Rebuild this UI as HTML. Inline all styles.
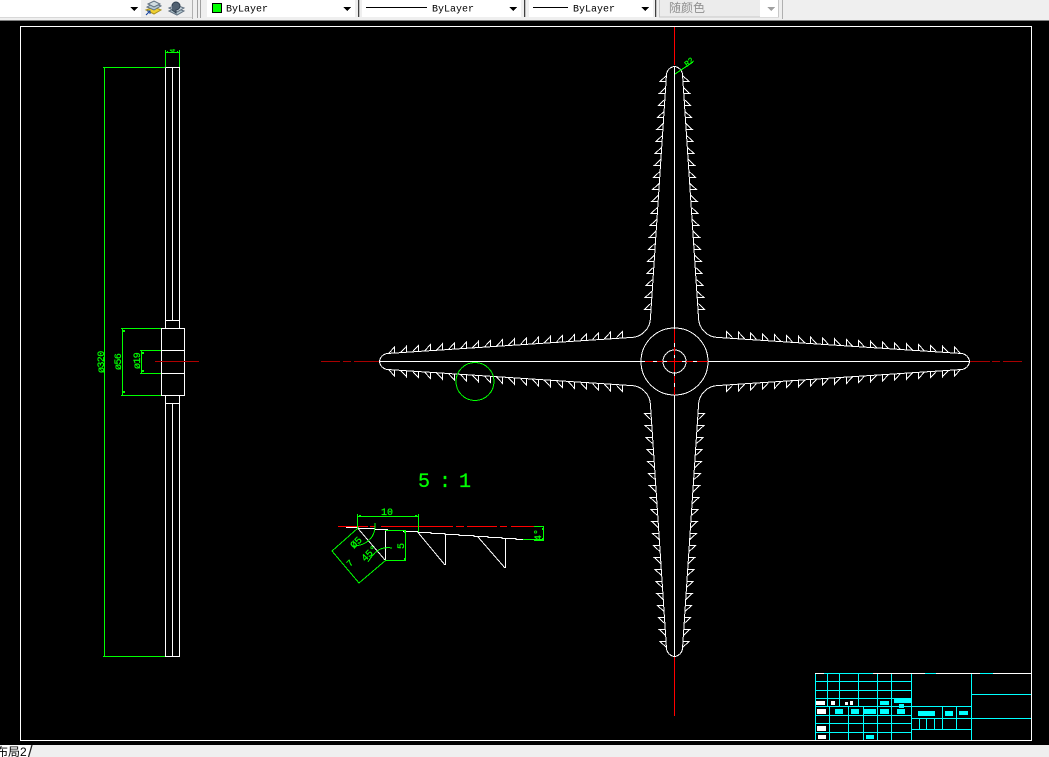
<!DOCTYPE html>
<html><head><meta charset="utf-8"><style>
html,body{margin:0;padding:0;width:1049px;height:757px;overflow:hidden;background:#000}
svg{position:absolute;left:0;top:0;display:block}
text{font-family:"Liberation Mono","Noto Sans CJK SC",monospace}
.g text,text.g{stroke:#0f0;stroke-width:.25}
</style></head><body>
<svg width="1049" height="757" viewBox="0 0 1049 757" xmlns="http://www.w3.org/2000/svg" shape-rendering="crispEdges">
<defs>
<g id="half" fill="none" stroke="#fff" stroke-width="1">
<path d="M-295 0A9 9 0 0 1-287-8L-44-24A20 20 0 0 0-24-44"/>
<path d="M-286-8L-280-14.5V-8M-274-8.8L-268-15.3V-8.8M-262-9.7L-256-16.2V-9.7M-250-10.5L-244-17V-10.5M-238-11.3L-232-17.8V-11.3M-226-12.1L-220-18.6V-12.1M-214-13L-208-19.5V-13M-202-13.8L-196-20.3V-13.8M-190-14.6L-184-21.1V-14.6M-178-15.4L-172-21.9V-15.4M-166-16.3L-160-22.8V-16.3M-154-17.1L-148-23.6V-17.1M-142-17.9L-136-24.4V-17.9M-130-18.8L-124-25.3V-18.8M-118-19.6L-112-26.1V-19.6M-106-20.4L-100-26.9V-20.4M-94-21.2L-88-27.7V-21.2M-82-22.1L-76-28.6V-22.1M-70-22.9L-64-29.4V-22.9M-58-23.7L-52-30.2V-23.7"/>
</g>
</defs>

<!-- toolbar -->
<rect x="0" y="0" width="1049" height="21" fill="#efefef"/>
<rect x="0" y="20" width="1049" height="1" fill="#808080"/>
<rect x="0" y="0" width="141" height="17" fill="#fff"/>
<rect x="0" y="17" width="192" height="1" fill="#d8d8d8"/>
<rect x="192" y="0" width="1" height="19" fill="#b0b0b0"/>
<rect x="197" y="0" width="1" height="18" fill="#a0a0a0"/>
<rect x="200" y="0" width="1" height="18" fill="#a0a0a0"/>
<rect x="207" y="0" width="148" height="17" fill="#fff"/>
<rect x="358" y="0" width="1" height="17" fill="#404040"/>
<rect x="359" y="0" width="1" height="17" fill="#c0c0c0"/>
<rect x="362" y="0" width="159" height="17" fill="#fff"/>
<rect x="524" y="0" width="1" height="17" fill="#404040"/>
<rect x="525" y="0" width="1" height="17" fill="#c0c0c0"/>
<rect x="529" y="0" width="124" height="17" fill="#fff"/>
<rect x="655" y="0" width="1" height="17" fill="#404040"/>
<rect x="656" y="0" width="1" height="17" fill="#c0c0c0"/>
<rect x="659.500" y="-1" width="119" height="18" fill="#ececec" stroke="#c8c8c8"/>
<rect x="760" y="0" width="18" height="17" fill="#fff"/>
<rect x="782" y="0" width="1" height="19" fill="#b0b0b0"/>
<path d="M130 7h8l-4 4zM343 7h8l-4 4zM509 7h8l-4 4zM641 7h8l-4 4z" fill="#000"/>
<path d="M767 7h8l-4 4z" fill="#a0a0a0"/>
<!-- layer icons -->
<g shape-rendering="auto">
<path d="M146 10l8-3 7 3-7 4z" fill="#f0d030" stroke="#a89020"/>
<path d="M147 7l7-4 7 3-7 4z" fill="#b4c8d0" stroke="#607080"/>
<path d="M148 4l6-3 6 3-6 3z" fill="#d0dce0" stroke="#607080"/>
<path d="M146 15l4-4M147 11h3v3" stroke="#1040a0" fill="none"/>
<path d="M169 11l7-3 8 3-7 4z" fill="#b4c8d0" stroke="#607080"/>
<path d="M169 8l7-3 8 3-7 4z" fill="#c8d4dc" stroke="#607080"/>
<path d="M172 6a4 4 0 1 1 4 4v3l-4-3" fill="#506070" stroke="#304050"/>
</g>
<!-- combos -->
<rect x="212.500" y="3.500" width="9" height="9" fill="#0f0" stroke="#000"/>
<text x="226" y="11.500" font-size="10" fill="#000">ByLayer</text>
<rect x="366" y="7" width="61" height="1" fill="#000"/>
<text x="432" y="11.500" font-size="10" fill="#000">ByLayer</text>
<rect x="533" y="7" width="35" height="1" fill="#000"/>
<text x="573" y="11.500" font-size="10" fill="#000">ByLayer</text>
<text x="669" y="12" font-size="12" fill="#909090" style="font-family:'Noto Sans CJK SC',sans-serif">随颜色</text>

<!-- status -->
<rect x="0" y="745" width="1049" height="12" fill="#efefef"/>
<rect x="0" y="745" width="30" height="12" fill="#fff"/>
<text x="-4" y="756" font-size="12" fill="#000" style="font-family:'Liberation Sans','Noto Sans CJK SC',sans-serif">布局2</text>
<path d="M32 745L28.500 757" stroke="#222" stroke-width="1.300" shape-rendering="auto"/>

<!-- frame -->
<rect x="20.500" y="26.500" width="1011" height="714" fill="none" stroke="#fff"/>

<!-- side view -->
<g fill="none" stroke="#fff">
<path d="M165.500 67.500H179.500V328M165.500 67.500V328M172.500 67.500V320.500M165.500 320.500H179.500"/>
<rect x="161.500" y="328.500" width="23" height="67"/>
<path d="M161.500 350.500H184.500M161.500 373.500H184.500"/>
<path d="M165.500 395.500V656.500H179.500V395.500M172.500 403.500V656.500M165.500 403.500H179.500"/>
</g>
<path d="M155 361.500H199" stroke="#b00000"/>
<g fill="none" stroke="#0f0">
<path d="M103 67.500H165M103 656.500H165M104.500 67V657"/>
<path d="M121 328.500H161M121 395.500H161M122.500 328V396"/>
<path d="M140 350.500H161M140 373.500H161M141.500 350V374"/>
<path d="M165.500 50V67M179.500 50V67M165 52.500H180"/>
</g>
<path d="M123 330h2v2h-2zM123 391h2v2h-2zM142 352h2v2h-2zM142 370h2v2h-2zM167 51h1v1h-1zM177 51h1v1h-1z" fill="#0f0"/>

<!-- front view -->
<path d="M321 361.500H340M343 361.500H351M354 361.500H380M970 361.500H990M992 361.500H1000M1003 361.500H1022" stroke="#a80000"/>
<g transform="translate(674.5,361.5)">
<use href="#half"/>
<use href="#half" transform="scale(1,-1)"/>
<use href="#half" transform="scale(-1,1)"/>
<use href="#half" transform="scale(-1,-1)"/>
<use href="#half" transform="rotate(90)"/>
<use href="#half" transform="rotate(90) scale(1,-1)"/>
<use href="#half" transform="rotate(90) scale(-1,1)"/>
<use href="#half" transform="rotate(90) scale(-1,-1)"/>
<path d="M-295 0H295M0-295V295" stroke="#fff"/>
</g>
<g fill="none" stroke="#fff">
<circle cx="674.500" cy="361.500" r="33.500"/>
<circle cx="674.500" cy="361.500" r="11.500"/>
</g>
<g stroke="#f00" fill="none">
<path d="M674.500 27V65M674.500 657V716"/>
<path d="M645 361.500H653M657 361.500H663M667 361.500H682M686 361.500H693M697 361.500H708"/>
<path d="M674.500 329V343M674.500 347V355M674.500 358V372M674.500 376V383M674.500 387V395"/>
</g>
<path d="M675 74L693 62" stroke="#0f0" fill="none"/>
<text class="g" x="0" y="0" font-size="8" fill="#0f0" transform="translate(687,67) rotate(-40)">R2</text>

<circle cx="475" cy="381.500" r="19" fill="none" stroke="#0f0"/>

<!-- dimension text -->
<g class="g" fill="#0f0" font-size="10">
<text transform="translate(104,373) rotate(-90)" style="letter-spacing:-.6px">ø320</text>
<text transform="translate(121,370) rotate(-90)" style="letter-spacing:-.6px">ø56</text>
<text transform="translate(140,369) rotate(-90)" style="letter-spacing:-.6px">ø19</text>
<text transform="translate(175,53) rotate(-90)" font-size="7">4</text>
</g>

<!-- 5:1 -->
<g class="g" fill="#0f0" font-size="20">
<text x="418" y="487">5</text>
<text x="439" y="487">:</text>
<text x="459" y="487">1</text>
</g>

<!-- detail -->
<path d="M338 526.500H368M370 526.500H375M381 526.500H453M456 526.500H464M467 526.500H497M500 526.500H507M511 526.500H542" stroke="#f00" fill="none"/>
<path d="M346 527.500H358V528.500H375V529.500H388M403 531.500H418V532.500H431V533.500H445V534.500H459V535.500H474V536.500H488V537.500H502V538.500H516V539.500H523" stroke="#fff" fill="none"/>
<path d="M385.500 529.500V560M445.500 534V565M505.500 539V568" stroke="#fff" fill="none"/>
<path d="M523 539.500H544M534 526.500H544M534 540.500H544M543.500 526V541" stroke="#0f0" fill="none"/>
<path d="M357.500 514V528M418.500 514V532M358 516.500H418M385 530.500H406M385 560.500H406M405.500 530V561" stroke="#0f0" fill="none"/>
<path d="M359 515h2v2h-2zM415 515h2v2h-2zM404 531h2v2h-2zM404 558h2v2h-2zM542 528h2v2h-2zM542 538h2v2h-2z" fill="#0f0"/>
<g fill="none">
<path d="M358 528.500L385 560M418 532.500L445 565M478 537L505 568" stroke="#fff"/>
<path d="M358 528L332 551L359 583L386 560" stroke="#0f0"/>
<path d="M375 523C376 538 366 546 352 546" stroke="#0f0"/>
<path d="M392 548C380 546 374 552 368 562" stroke="#0f0"/>
</g>
<g class="g" fill="#0f0" font-size="10">
<text x="381" y="515">10</text>
<text transform="translate(404,549) rotate(-90)">5</text>
<text transform="translate(541,541) rotate(-90)">4°</text>
<text transform="translate(354,549) rotate(-45)">Ø5</text>
<text transform="translate(365,562) rotate(-45)">45°</text>
<text transform="translate(350,567) rotate(-45)" font-size="9">7</text>
</g>

<!-- title block -->
<g stroke="#00ffff" fill="none">
<path d="M815.500 673.500H1031M815.500 681.500H911M815.500 690.500H911M815.500 698.500H911M815.500 706.500H971M815.500 715.500H911M815.500 723.500H911M815.500 732.500H911"/>
<path d="M815.500 673V740M827.500 673V706M839.500 673V706M858.500 673V706M877.500 673V740M891.500 673V740M911.500 673V740M971.500 673V740"/>
<path d="M829.500 706V740M848.500 706V740M863.500 706V740"/>
<path d="M911 718.500H1031M911 729.500H971M971 694.500H1031"/>
<path d="M942.500 706V729M956.500 706V729M919.500 718V729M926.500 718V729M934.500 718V729"/>
</g>
<path d="M824 673.500H873M925 673.500H936M980 673.500H993" stroke="#00ffff"/>
<path d="M815 673.500H824M873 673.500H925M936 673.500H980M993 673.500H1031" stroke="#fff"/>
<path d="M815 740.500H1031" stroke="#fff"/>
<g fill="#00ffff">
<rect x="880" y="701" width="9" height="4"/><rect x="894" y="698" width="17" height="5"/><rect x="899" y="704" width="5" height="4"/>
<rect x="835" y="709" width="8" height="5"/><rect x="851" y="709" width="8" height="5"/><rect x="864" y="709" width="12" height="5"/><rect x="880" y="709" width="9" height="5"/><rect x="897" y="709" width="8" height="5"/>
<rect x="918" y="711" width="17" height="5"/><rect x="945" y="711" width="8" height="5"/><rect x="959" y="711" width="9" height="4"/>
<rect x="866" y="735" width="8" height="4"/>
</g>
<g fill="#fff">
<rect x="816" y="701" width="9" height="4"/><rect x="831" y="701" width="4" height="4"/><rect x="845" y="702" width="3" height="3"/><rect x="850" y="701" width="3" height="4"/>
<rect x="817" y="709" width="9" height="5"/><rect x="817" y="726" width="9" height="5"/><rect x="818" y="735" width="8" height="4"/>
</g>
</svg>
</body></html>
